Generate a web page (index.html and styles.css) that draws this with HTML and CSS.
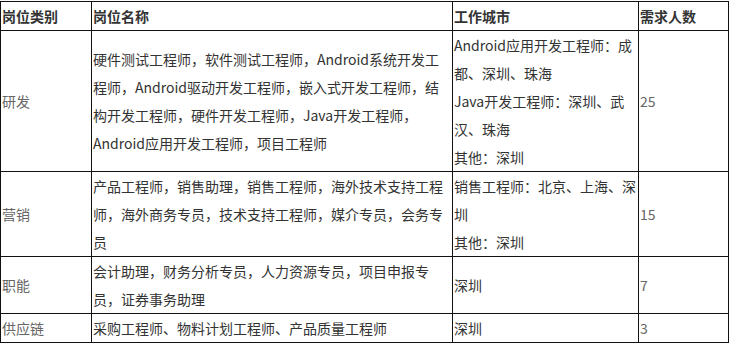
FILE: index.html
```html
<!DOCTYPE html>
<html>
<head>
    <title>招聘岗位</title>
    <meta charset="UTF-8">
    <link rel="stylesheet" href="styles.css">
</head>
<body>
    <table class="jobs">
        <colgroup>
            <col class="col-type">
            <col class="col-name">
            <col class="col-city">
            <col class="col-count">
        </colgroup>
        <thead>
            <tr>
                <th>岗位类别</th>
                <th>岗位名称</th>
                <th>工作城市</th>
                <th>需求人数</th>
            </tr>
        </thead>
        <tbody>
            <tr>
                <td class="type">研发</td>
                <td>硬件测试工程师，软件测试工程师，Android系统开发工<br>程师，Android驱动开发工程师，嵌入式开发工程师，结<br>构开发工程师，硬件开发工程师，Java开发工程师，<br>Android应用开发工程师，项目工程师</td>
                <td>Android应用开发工程师：成<br>都、深圳、珠海<br>Java开发工程师：深圳、武<br>汉、珠海<br>其他：深圳</td>
                <td class="count">25</td>
            </tr>
            <tr>
                <td class="type">营销</td>
                <td>产品工程师，销售助理，销售工程师，海外技术支持工程<br>师，海外商务专员，技术支持工程师，媒介专员，会务专<br>员</td>
                <td>销售工程师：北京、上海、深<br>圳<br>其他：深圳</td>
                <td class="count">15</td>
            </tr>
            <tr>
                <td class="type">职能</td>
                <td>会计助理，财务分析专员，人力资源专员，项目申报专<br>员，证券事务助理</td>
                <td>深圳</td>
                <td class="count">7</td>
            </tr>
            <tr>
                <td class="type">供应链</td>
                <td>采购工程师、物料计划工程师、产品质量工程师</td>
                <td>深圳</td>
                <td class="count">3</td>
            </tr>
        </tbody>
    </table>
</body>
</html>
```

FILE: styles.css
```css
body {
    margin: 0;
    padding-top: 1px;
    background: #fff;
    font-family: "Noto Sans CJK SC", "Noto Sans", sans-serif;
    font-size: 14px;
    color: #333;
}
.jobs {
    width: 729px;
    border-collapse: collapse;
    table-layout: fixed;
}
.col-type {
    width: 91px;
}
.col-name {
    width: 361px;
}
.col-city {
    width: 186px;
}
.col-count {
    width: 90px;
}
.jobs th,
.jobs td {
    border: 1px solid #111;
    padding: 0 1px;
    line-height: 28px;
    text-align: left;
    vertical-align: middle;
    white-space: nowrap;
}
.jobs th {
    font-weight: bold;
    color: #333;
}
.jobs td.type,
.jobs td.count {
    color: #666;
}
```
